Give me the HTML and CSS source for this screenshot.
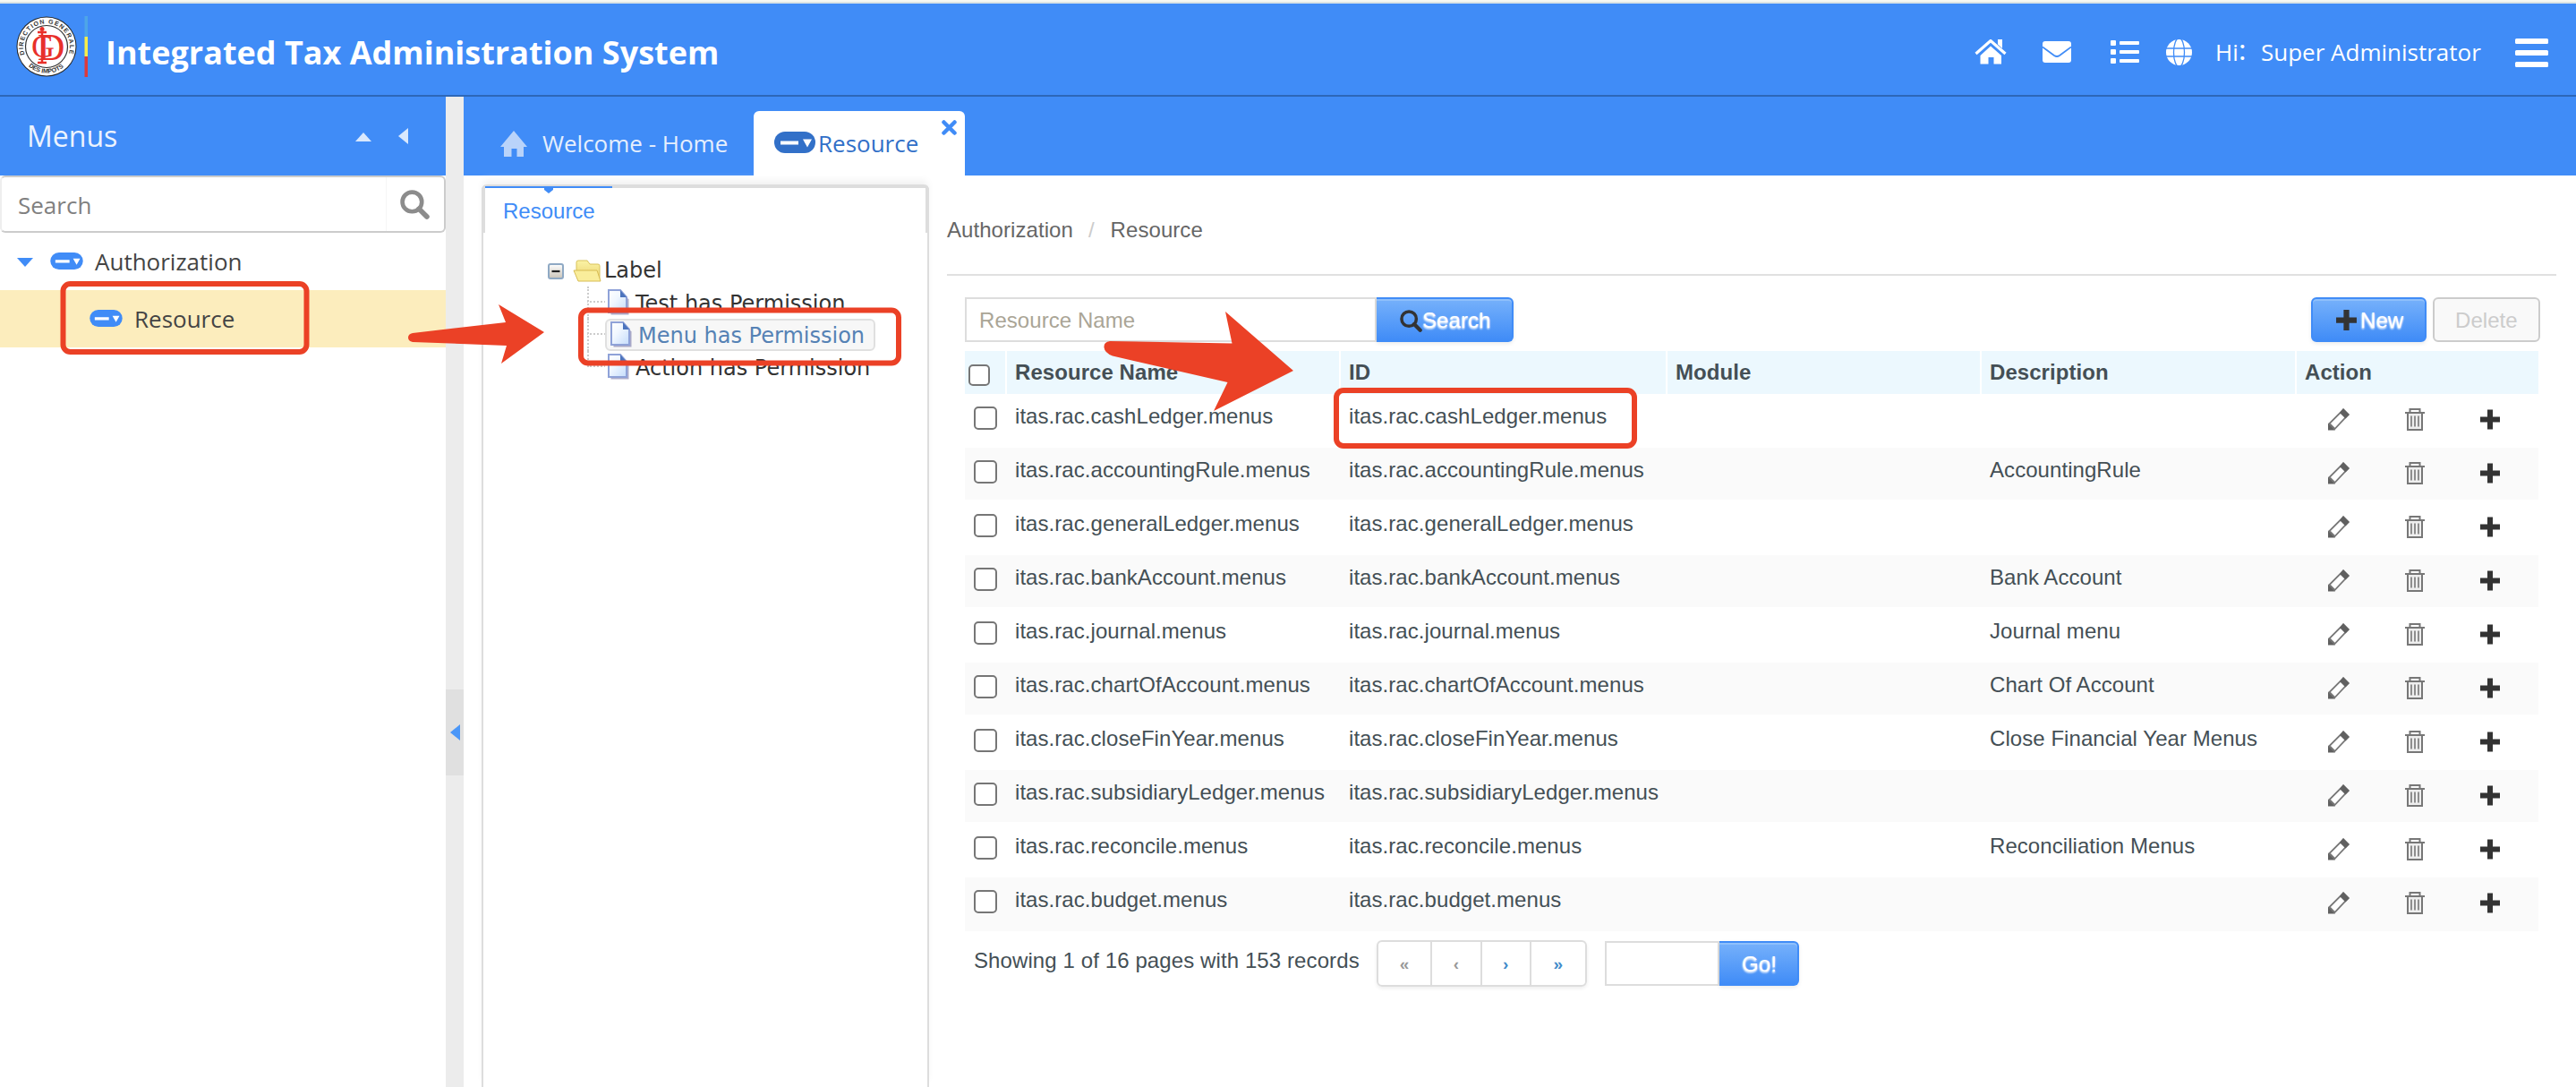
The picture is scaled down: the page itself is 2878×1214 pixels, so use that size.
FILE: index.html
```html
<!DOCTYPE html>
<html lang="en">
<head>
<meta charset="utf-8">
<title>Integrated Tax Administration System</title>
<link rel="stylesheet" href="styles.css">
</head>
<body>
<svg class="defs" aria-hidden="true">
  <symbol id="field" viewBox="0 0 46 24"><rect width="46" height="24" rx="12" fill="currentColor"/><path class="cut" d="M7 10.500h20v4H7zM32 8.500h10l-5 9z"/></symbol>
  <symbol id="pencil" viewBox="0 0 24 25"><path d="M17 1.500 22.500 7 7.500 23 1.500 17z" fill="#fff" stroke="#777" stroke-width="1.800"/><path d="M17 0 24 7 19.500 11.500 13 5zM0 16.500 8 24.500H0z" fill="#606060"/></symbol>
  <symbol id="trash" viewBox="0 0 22 25"><path d="M3 6h16v18H3z" fill="#eee"/><path d="M5.500 4V1h11v3M0 5h22M3 6v18h16V6" fill="none" stroke="#777" stroke-width="2"/><path d="M7 8.500v12M11 8.500v12M15 8.500v12" stroke="#777" stroke-width="1.600"/></symbol>
  <symbol id="plus" viewBox="0 0 24 24"><path d="M9 1h6v8h8v6h-8v8H9v-8H1V9h8z" fill="#333"/></symbol>
  <symbol id="lens" viewBox="0 0 32 32"><circle cx="13" cy="13" r="10.500" fill="none" stroke="currentColor" stroke-width="4.500"/><path d="m20.500 20.500 8.500 8.500" stroke="currentColor" stroke-width="5.500" stroke-linecap="round"/></symbol>
  <symbol id="page" viewBox="0 0 26 29"><path d="M3 2h13l7 8v17H3z" fill="#6c6aa0" opacity=".55" transform="translate(1.500 1.500)"/><path d="M2 1h13l7 8v17H2z" fill="url(#paper)" stroke="#8fa2d8" stroke-width="2"/><path d="M15 1v8h7z" fill="#4c74bd"/></symbol>
  <linearGradient id="paper" x1="0" y1="0" x2="1" y2="1"><stop offset="0" stop-color="#fff"/><stop offset=".4" stop-color="#f1f7ff"/><stop offset="1" stop-color="#c4dcfb"/></linearGradient>
  <linearGradient id="gold" x1="0" y1="0" x2="0" y2="1"><stop offset="0" stop-color="#fbf3a6"/><stop offset="1" stop-color="#e9d06b"/></linearGradient>
  <linearGradient id="knob" x1="0" y1="0" x2="0" y2="1"><stop offset="0" stop-color="#fff"/><stop offset="1" stop-color="#c9c3b8"/></linearGradient>
</svg>

<header class="topbar">
  <svg class="logo" viewBox="0 0 82 68">
    <circle cx="34" cy="34" r="33.500" fill="#222"/><circle cx="34" cy="34" r="32.500" fill="#fff"/>
    <circle cx="34" cy="34" r="23.500" fill="#fff" stroke="#333" stroke-width="1.200"/>
    <path id="arcTop" d="M9.500 43A26 26 0 1 1 58.500 43" fill="none"/>
    <path id="arcBottom" d="M11 53A30 30 0 0 0 57 53" fill="none"/>
    <text class="seal"><textPath href="#arcTop" textLength="98">DIRECTION GENERALE</textPath></text>
    <text class="seal"><textPath href="#arcBottom" startOffset="4" textLength="43">DES IMPOTS</textPath></text>
    <text class="mono" x="24" y="49" font-size="42">D</text>
    <text class="mono" x="17" y="46" font-size="36">G</text>
    <path d="M24 18h10M29 18v34M24 52h10" stroke="#e8302a" stroke-width="2.500"/><circle cx="29" cy="14.500" r="2.500" fill="#e8302a"/>
    <path fill="#4ea5e8" d="M76.500 0h3.500v23h-3.500z"/><path fill="#f7ee4a" d="M76.500 23h3.500v22h-3.500z"/><path fill="#dc3a3c" d="M76.500 45h3.500v23h-3.500z"/>
  </svg>
  <h1>Integrated Tax Administration System</h1>
  <nav class="tools">
    <svg class="t-home" viewBox="0 0 36 28"><path d="M18 7.500 30 18v9.500h-8.500V20h-6v7.500H6.500V18z" fill="#fff"/><path d="m1.500 16 16.500-14.500L34.500 16" fill="none" stroke="#fff" stroke-width="3.200"/><path d="M26 0h5v10l-5-4.500z" fill="#fff"/></svg>
    <svg class="t-mail" viewBox="0 0 32 24"><rect width="32" height="24" rx="3" fill="#fff"/><path d="M0 6.500 13 16q3 2 6 0L32 6.500" fill="none" stroke="#408cf7" stroke-width="1.800"/></svg>
    <svg class="t-list" viewBox="0 0 32 26"><g fill="#fff"><rect width="6" height="6" rx="1"/><rect y="10" width="6" height="6" rx="1"/><rect y="20" width="6" height="6" rx="1"/><rect x="10" y="1" width="22" height="4" rx="1"/><rect x="10" y="11" width="22" height="4" rx="1"/><rect x="10" y="21" width="22" height="4" rx="1"/></g></svg>
    <svg class="t-globe" viewBox="0 0 29 29"><circle cx="14.500" cy="14.500" r="14.500" fill="#fff"/><g fill="none" stroke="#408cf7" stroke-width="1.300"><ellipse cx="14.500" cy="14.500" rx="6" ry="16"/><path d="M0 10h29M0 19h29"/></g></svg>
    <span class="hi">Hi<i>：</i></span><span class="user">Super Administrator</span>
    <span class="burger"><b></b><b></b><b></b></span>
  </nav>
</header>

<div class="shell">
  <aside class="side">
    <div class="side-head"><span>Menus</span>
      <svg class="up" viewBox="0 0 18 10"><path d="M9 0 18 10H0z"/></svg>
      <svg class="left" viewBox="0 0 11 18"><path d="M0 9 11 0v18z"/></svg>
    </div>
    <div class="side-search"><span>Search</span><div><svg><use href="#lens"/></svg></div></div>
    <div class="node"><svg class="tri" viewBox="0 0 18 10"><path d="M0 0h18L9 10z"/></svg><svg class="fld"><use href="#field"/></svg>Authorization</div>
    <div class="node leaf"><svg class="fld"><use href="#field"/></svg>Resource</div>
  </aside>
  <div class="gutter"><div class="grip"><svg viewBox="0 0 11 18"><path d="M0 9 11 0v18z"/></svg></div></div>
  <main class="main">
    <div class="tabs">
      <div class="tab home"><svg viewBox="0 0 30 29"><path d="M15 0 30 18h-4v11h-7.500v-9h-6v9H4V18H0z"/></svg>Welcome - Home</div>
      <div class="tab active"><svg class="fld2"><use href="#field"/></svg><span>Resource</span><svg class="close" viewBox="0 0 17 17"><path d="m2.500 2.500 12 12M14.500 2.500l-12 12"/></svg></div>
    </div>
    <div class="content">
      <section class="panel">
        <div class="panel-tab"><div class="cur"><svg viewBox="0 0 10 6"><path d="M0 0h10v2L5 6 0 2z"/></svg><span>Resource</span></div></div>
        <div class="tree">
          <div class="root"><svg class="knob" viewBox="0 0 18 18"><rect x="1" y="1" width="16" height="16" rx="2" fill="url(#knob)" stroke="#8fa9c4" stroke-width="2"/><path d="M4.500 9h9" stroke="#222" stroke-width="2.200"/></svg><svg class="folder" viewBox="0 0 32 25"><path d="M4 12V3q0-2 2-2h10l3 4h9q2 0 2 2v16H6z" fill="url(#gold)" stroke="#d9c25a"/><path d="M1 12h26l4 12H6z" fill="#f9ed9b" stroke="#d8bd55"/></svg>Label</div>
          <div class="kid"><i></i><a><svg><use href="#page"/></svg>Test has Permission</a></div>
          <div class="kid"><i></i><a class="sel"><svg><use href="#page"/></svg>Menu has Permission</a></div>
          <div class="kid last"><i></i><a><svg><use href="#page"/></svg>Action has Permission</a></div>
        </div>
      </section>
      <section class="work">
        <div class="crumbs"><span>Authorization</span><em>/</em><span>Resource</span></div>
        <div class="toolbar">
          <div class="query">Resource Name</div>
          <div class="btn go"><svg><use href="#lens"/></svg>Search</div>
          <div class="btn new"><svg><use href="#plus"/></svg>New</div>
          <div class="btn off">Delete</div>
        </div>
        <table>
          <colgroup><col class="c1"><col class="c2"><col class="c3"><col class="c4"><col class="c5"><col class="c6"></colgroup>
          <thead><tr><th><s></s></th><th>Resource Name</th><th>ID</th><th>Module</th><th>Description</th><th>Action</th></tr></thead>
          <tbody>
            <tr><td><s></s></td><td>itas.rac.cashLedger.menus</td><td>itas.rac.cashLedger.menus</td><td></td><td></td><td><div class="acts"><svg><use href="#pencil"/></svg><svg><use href="#trash"/></svg><svg><use href="#plus"/></svg></div></td></tr>
            <tr><td><s></s></td><td>itas.rac.accountingRule.menus</td><td>itas.rac.accountingRule.menus</td><td></td><td>AccountingRule</td><td><div class="acts"><svg><use href="#pencil"/></svg><svg><use href="#trash"/></svg><svg><use href="#plus"/></svg></div></td></tr>
            <tr><td><s></s></td><td>itas.rac.generalLedger.menus</td><td>itas.rac.generalLedger.menus</td><td></td><td></td><td><div class="acts"><svg><use href="#pencil"/></svg><svg><use href="#trash"/></svg><svg><use href="#plus"/></svg></div></td></tr>
            <tr><td><s></s></td><td>itas.rac.bankAccount.menus</td><td>itas.rac.bankAccount.menus</td><td></td><td>Bank Account</td><td><div class="acts"><svg><use href="#pencil"/></svg><svg><use href="#trash"/></svg><svg><use href="#plus"/></svg></div></td></tr>
            <tr><td><s></s></td><td>itas.rac.journal.menus</td><td>itas.rac.journal.menus</td><td></td><td>Journal menu</td><td><div class="acts"><svg><use href="#pencil"/></svg><svg><use href="#trash"/></svg><svg><use href="#plus"/></svg></div></td></tr>
            <tr><td><s></s></td><td>itas.rac.chartOfAccount.menus</td><td>itas.rac.chartOfAccount.menus</td><td></td><td>Chart Of Account</td><td><div class="acts"><svg><use href="#pencil"/></svg><svg><use href="#trash"/></svg><svg><use href="#plus"/></svg></div></td></tr>
            <tr><td><s></s></td><td>itas.rac.closeFinYear.menus</td><td>itas.rac.closeFinYear.menus</td><td></td><td>Close Financial Year Menus</td><td><div class="acts"><svg><use href="#pencil"/></svg><svg><use href="#trash"/></svg><svg><use href="#plus"/></svg></div></td></tr>
            <tr><td><s></s></td><td>itas.rac.subsidiaryLedger.menus</td><td>itas.rac.subsidiaryLedger.menus</td><td></td><td></td><td><div class="acts"><svg><use href="#pencil"/></svg><svg><use href="#trash"/></svg><svg><use href="#plus"/></svg></div></td></tr>
            <tr><td><s></s></td><td>itas.rac.reconcile.menus</td><td>itas.rac.reconcile.menus</td><td></td><td>Reconciliation Menus</td><td><div class="acts"><svg><use href="#pencil"/></svg><svg><use href="#trash"/></svg><svg><use href="#plus"/></svg></div></td></tr>
            <tr><td><s></s></td><td>itas.rac.budget.menus</td><td>itas.rac.budget.menus</td><td></td><td></td><td><div class="acts"><svg><use href="#pencil"/></svg><svg><use href="#trash"/></svg><svg><use href="#plus"/></svg></div></td></tr>
          </tbody>
        </table>
        <div class="pager">
          <span class="info">Showing 1 of 16 pages with 153 records</span>
          <div class="pages"><span class="end dim">«</span><span class="dim">‹</span><span>›</span><span class="end">»</span></div>
          <div class="goto"></div>
          <div class="btn jump">Go!</div>
        </div>
      </section>
    </div>
  </main>
</div>

<svg class="marks" viewBox="0 0 2878 1214">
  <g fill="none" stroke="#eb4126" stroke-width="6">
    <rect x="70.500" y="317" width="272" height="76" rx="8"/>
    <rect x="649" y="346.500" width="355" height="59" rx="8"/>
    <rect x="1493" y="436" width="333" height="62" rx="8"/>
  </g>
  <g fill="#eb4126">
    <path d="M461 372 565 360 557 340 608 371 560 406 566 386 461 382Q456 381 456 377T461 372z"/>
    <path d="M1240 381 1376.500 383.500 1369 348 1445 414 1356 459 1371.500 427 1243 397.500Q1234 394 1233.500 388T1240 381z"/>
  </g>
</svg>
</body>
</html>
```
FILE: styles.css
```css
* { box-sizing: border-box; }
html { height: 1214px; overflow: hidden; }
body { margin: 0; width: 2878px; height: 1214px; overflow: hidden; position: relative; background: #fff; font: 24px "Liberation Sans", Arial, sans-serif; color: #444f55; border-top: 2px solid #f6f8f2; white-space: nowrap; }
svg { display: block; flex: none; }
.defs { width: 0; height: 0; float: left; }
.cut { fill: #fff; }
.topbar { height: 106px; background: #408cf7; border-top: 2px solid #dbe3e4; border-bottom: 2px solid #2d67b8; display: flex; padding: 0 31px 0 17px; color: #fff; font-family: "Open Sans", sans-serif; }
.logo { width: 82px; height: 68px; margin: 14px 18px 0 1px; }
.seal { font: bold 7px "Liberation Sans", sans-serif; fill: #333; }
.mono { font-family: "Liberation Serif", serif; fill: #e8302a; }
h1 { margin: 31px 0 0; font-size: 36px; line-height: 48px; font-weight: 700; }
.tools { margin-left: auto; display: flex; font-size: 26px; line-height: 36px; }
.t-home { width: 36px; height: 28px; margin: 40px 40px 0 0; }
.t-mail { width: 32px; height: 24px; margin: 42px 44px 0 0; }
.t-list { width: 32px; height: 26px; margin: 41px 30px 0 0; }
.t-globe { width: 29px; height: 29px; margin: 40px 26px 0 0; }
.hi { width: 51px; margin-top: 36px; display: flex; }
.hi i { font: normal 26px/36px "Noto Sans CJK SC", sans-serif; width: 26px; margin: -2px 0 0 -2px; }
.user { width: 259px; margin-top: 36px; }
.burger { width: 37px; margin-top: 39px; margin-left: 25px; display: flex; flex-direction: column; gap: 7px; }
.burger b { height: 6px; border-radius: 1.500px; background: #fff; }

.shell { display: flex; height: 1106px; }
.side { width: 498px; font: 26px "Open Sans", sans-serif; color: #444; }
.side-head { height: 88px; background: #408cf7; color: #ecf3fe; font-size: 32px; line-height: 88px; padding-left: 30px; display: flex; }
.side-head span { width: 367px; }
.side-head svg { fill: #d9e8fd; }
.up { width: 18px; height: 10px; margin: 40px 30px 0 0; }
.left { width: 11px; height: 18px; margin-top: 35px; }
.side-search { height: 64px; border: 2px solid #ccc; border-left-color: #eee; border-radius: 6px; padding-left: 18px; line-height: 62px; color: #808080; display: flex; }
.side-search span { width: 412px; border-right: 1px solid #f5f5f5; }
.side-search div { padding: 14px 0 0 15px; color: #8c8c8c; }
.side-search svg { width: 33px; height: 33px; }
.node { height: 64px; line-height: 64px; display: flex; align-items: flex-start; padding-left: 19px; }
.tri { width: 18px; height: 10px; margin: 28px 19px 0 0; fill: #408cf7; }
.fld { width: 37px; height: 19px; margin: 22px 13px 0 0; color: #408cf7; }
.leaf { background: #fcedbd; padding-left: 100px; }
.leaf .cut { fill: #fcedbd; }
.gutter { width: 20px; background: #ececec; padding-top: 662px; }
.grip { height: 96px; background: #e0e0e0; padding: 39px 0 0 5px; }
.grip svg { width: 11px; height: 18px; fill: #4b97f8; }

.main { flex: 1; }
.tabs { height: 88px; background: #408cf7; display: flex; align-items: flex-end; font: 26px/72px "Open Sans", sans-serif; }
.tab { height: 72px; display: flex; }
.home { width: 324px; padding-left: 41px; color: #e6effd; }
.home svg { width: 30px; height: 29px; margin: 22px 17px 0 0; fill: #b9d3fa; }
.active { width: 236px; background: #fff; border-radius: 6px 6px 0 0; padding-left: 23px; color: #3270c8; }
.fld2 { width: 46px; height: 24px; margin: 23px 3px 0 0; }
.active span { width: 138px; }
.close { width: 17px; height: 17px; margin-top: 10px; fill: none; stroke: #408cf7; stroke-width: 4.500; stroke-linecap: round; }

.content { display: flex; height: 1018px; }
.panel { width: 500px; margin: 10px 20px 0 20px; border: 2px solid #ddd; border-top: 0; border-bottom: 0; border-radius: 6px 6px 0 0; box-shadow: 0 -6px 8px -2px #f0f0f0; }
.panel-tab { margin: 0 -2px; height: 54px; border: 4px solid #ddd; border-top-width: 2px; border-bottom: 0; border-radius: 6px 6px 0 0; display: flex; background: linear-gradient(#ddd 2px, #fff 2px); }
.cur { width: 142px; border-top: 2px solid #408cf7; color: #408cf7; padding: 0 0 0 20px; }
.cur svg { width: 10px; height: 6px; margin-left: 46px; fill: #408cf7; }
.cur span { display: block; line-height: 28px; margin-top: 6px; }
.tree { padding: 24px 0 0 72px; font: 24px/36px "DejaVu Sans", sans-serif; color: #333; }
.root { display: flex; height: 36px; }
.knob { width: 18px; height: 18px; margin: 10px 10px 0 0; }
.folder { width: 32px; height: 25px; margin: 6px 3px 0 0; }
.kid { height: 36px; display: flex; padding-left: 44px; }
.kid i { width: 20px; border-left: 2px dotted #ccc; height: 36px; background: radial-gradient(circle, #ccc 1px, transparent 1.300px) 0 15px / 4px 4px repeat-x; }
.kid.last i { height: 18px; }
.kid a { display: flex; height: 36px; border: 2px solid transparent; border-radius: 6px; line-height: 34px; }
.kid a svg { width: 26px; height: 29px; margin: 1px 6px 0 0; }
.kid a.sel { border-color: #e0e0e0; background: #f7f7f7; color: #5582b5; padding-right: 10px; padding-left: 3px; }

.work { width: 1798px; letter-spacing: 0.060px; }
.crumbs { height: 112px; border-bottom: 2px solid #e0e0e0; padding-top: 44px; line-height: 34px; color: #666; display: flex; }
.crumbs em { color: #ccc; font-style: normal; margin: 0 18px 0 17px; }
.toolbar { display: flex; margin: 24px 0 0 20px; width: 1760px; }
.query { width: 460px; height: 50px; border: 2px solid #ddd; padding-left: 14px; line-height: 48px; color: #aaa596; }
.btn { height: 50px; border: 2px solid #408cf7; border-radius: 6px; background: linear-gradient(#76b1fb, #408cf7); box-shadow: inset 0 2px 0 #8fc0fb, 0 2px 4px rgba(0,0,0,.08); color: #fff; text-shadow: 0 1px 2px rgba(255,255,255,.9), 0 2px 2px rgba(255,255,255,.5); line-height: 48px; display: flex; }
.go { width: 153px; border-left: 0; border-radius: 0 6px 6px 0; padding-left: 26px; }
.go svg { width: 25px; height: 25px; margin: 12px 0 0; color: #333; }
.new { width: 129px; margin-left: auto; padding-left: 25px; }
.new svg { width: 25px; height: 25px; margin: 11px 3px 0 0; }
.off { width: 120px; margin-left: 7px; padding-left: 23px; color: #ccc; border-color: #ccc; background: #f9f9f9; box-shadow: none; text-shadow: none; }
table { margin: 10px 0 0 20px; width: 1758px; table-layout: fixed; border-collapse: separate; border-spacing: 0; }
.c1 { width: 47px; } .c2 { width: 373px; } .c3 { width: 365px; } .c4 { width: 351px; } .c5 { width: 352px; } .c6 { width: 270px; }
th { height: 48px; padding: 0 9px; text-align: left; background: #ecf8fe; background-clip: padding-box; border-right: 2px solid #fff; line-height: 48px; }
th:last-child { border-right: 0; }
th:first-child { padding: 0 0 0 4px; }
s { display: block; width: 26px; height: 26px; border: 2px solid #767676; border-radius: 5px; background: #fff; }
th s { width: 24px; height: 24px; margin-top: 6px; }
td { height: 60px; padding: 10px 8px 0 9px; line-height: 29px; vertical-align: top; }
td:first-child { padding: 14px 0 0 10px; }
td:last-child { padding: 16px 0 0 35px; }
tbody tr:nth-child(even) td { background: #fafafa; border-bottom: 2px solid #fff; }
tbody tr:last-child td { border-bottom: 0 !important; }
.acts { display: flex; }
.acts svg { width: 24px; height: 25px; }
.acts svg:nth-child(2) { width: 22px; margin: 0 61px 0 62px; }
.pager { display: flex; padding-left: 30px; margin-top: 10px; }
.info { width: 450px; line-height: 46px; letter-spacing: 0.100px; }
.pages { width: 235px; height: 52px; border: 2px solid #ddd; border-radius: 6px; display: flex; box-shadow: 0 2px 4px rgba(0,0,0,.07); font: bold 19px/50px "Liberation Sans", sans-serif; text-align: center; color: #428bca; }
.pages span { width: 56px; border-right: 2px solid #ddd; }
.pages .end { width: 61px; }
.pages span:last-child { border: 0; }
.pages .dim { color: #999; }
.goto { width: 128px; height: 50px; margin: 1px 0 0 20px; border: 2px solid #ddd; }
.jump { width: 89px; margin-top: 1px; border-left: 0; border-radius: 0 6px 6px 0; padding-left: 25px; }
.marks { position: absolute; left: 0; top: -2px; width: 2878px; height: 1214px; pointer-events: none; }
```
